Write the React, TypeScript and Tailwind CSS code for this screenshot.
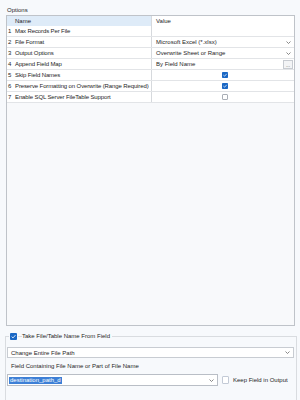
import { ReactNode } from "react";

type Row = {
    n: number
    name: string
    value?: ReactNode
}

function Chevron({ className = "" }: { className?: string }) {
    return (
        <svg width="5" height="3" viewBox="0 0 5 3" className={className}>
            <path d="M0.5 0.5 L2.5 2.5 L4.5 0.5" fill="none" stroke="#6b6b6b" strokeWidth="0.8" />
        </svg>
    )
}

function Check({ on, size = 6 }: { on: boolean, size?: number }) {
    if (!on) {
        return <span className="block border border-[#a9aeb6] bg-white rounded-[1px]" style={{ width: size, height: size }} />
    }
    return (
        <svg width={size} height={size} viewBox="0 0 6 6" className="block">
            <rect x="0" y="0" width="6" height="6" rx="0.8" fill="#1a67c4" />
            <path d="M1.4 3.1 L2.6 4.2 L4.7 1.8" fill="none" stroke="#ffffff" strokeWidth="0.7" />
        </svg>
    )
}

function ComboCell({ text }: { text: string }) {
    return (
        <div className="flex items-center justify-between h-full pl-[4px] pr-[3px]">
            <span>{text}</span>
            <Chevron />
        </div>
    )
}

const rows: Row[] = [
    { n: 1, name: "Max Records Per File" },
    { n: 2, name: "File Format", value: <ComboCell text="Microsoft Excel (*.xlsx)" /> },
    { n: 3, name: "Output Options", value: <ComboCell text="Overwrite Sheet or Range" /> },
    {
        n: 4, name: "Append Field Map", value: (
            <div className="flex items-center justify-between h-full pl-[4px] pr-[1px]">
                <span>By Field Name</span>
                <span className="flex items-end justify-center w-[10px] h-[9px] border border-[#c7cbd1] bg-[#f3f4f6] text-[5px] leading-[5px] text-[#555]">...</span>
            </div>
        )
    },
    { n: 5, name: "Skip Field Names", value: <div className="flex items-center justify-center h-full pl-[4px]"><Check on /></div> },
    { n: 6, name: "Preserve Formatting on Overwrite (Range Required)", value: <div className="flex items-center justify-center h-full pl-[4px]"><Check on /></div> },
    { n: 7, name: "Enable SQL Server FileTable Support", value: <div className="flex items-center justify-center h-full pl-[4px]"><Check on={false} /></div> },
]

export default function App() {
    return (
        <div className="w-[300px] h-[400px] overflow-hidden bg-[#f7f9fc] text-[6px] leading-[8px] text-[#1e1e1e]" style={{ fontFamily: '"Liberation Sans", Arial, sans-serif' }}>
            <div className="h-[15px] pl-[7px] pt-[6px]">Options</div>

            {/* property grid */}
            <div className="ml-[6px] w-[289px] h-[311px] border border-[#bfc3c9] bg-[#f8f9fb]">
                <div className="grid grid-cols-[6px_139px_1fr] h-[10px] bg-white">
                    <div className="bg-[#deebf8]" />
                    <div className="bg-[#deebf8] border-r border-[#d6d9dd] pl-[2px] leading-[10px]">Name</div>
                    <div className="pl-[4px] leading-[10px]">Value</div>
                </div>
                {rows.map((r) => (
                    <div key={r.n} className="grid grid-cols-[6px_139px_1fr] h-[11px] bg-white border-b border-[#e2e4e7] leading-[10px]">
                        <div className="pl-[1px]">{r.n}</div>
                        <div className="border-r border-[#d6d9dd] pl-[2px] whitespace-nowrap tracking-[-0.12px]">{r.name}</div>
                        <div className="h-[10px]">{r.value}</div>
                    </div>
                ))}
            </div>

            {/* file name from field */}
            <div className="mt-[10px] ml-[5px] w-[292px] h-[80px] border border-[#d9dce0] border-b-0">
                <div className="-mt-[4px] flex items-center gap-[4px] pl-[3px]">
                    <span className="bg-[#f7f9fc] px-[1px]"><Check on size={7} /></span>
                    <span className="bg-[#f7f9fc] pr-[2px] leading-[7px]">Take File/Table Name From Field</span>
                </div>
                <div className="mt-[7px] ml-[1px] w-[287px] h-[11px] border border-[#c8ccd2] bg-white flex items-center justify-between pl-[3px] pr-[3px]">
                    <span>Change Entire File Path</span>
                    <Chevron />
                </div>
                <div className="mt-[3px] pl-[5px] h-[13px] leading-[10px]">Field Containing File Name or Part of File Name</div>
                <div className="flex items-center">
                    <div className="ml-[1px] w-[211px] h-[12px] border border-[#b9bec6] bg-white flex items-center justify-between pl-[1px] pr-[3px]">
                        <span className="bg-[#3d7fd6] text-white px-[1px] leading-[7px]">destination_path_d</span>
                        <Chevron />
                    </div>
                    <span className="ml-[4px] block w-[7px] h-[8px] border border-[#c3cad6] bg-white rounded-[1px]" />
                    <span className="ml-[4px]">Keep Field in Output</span>
                </div>
            </div>
        </div>
    )
}
